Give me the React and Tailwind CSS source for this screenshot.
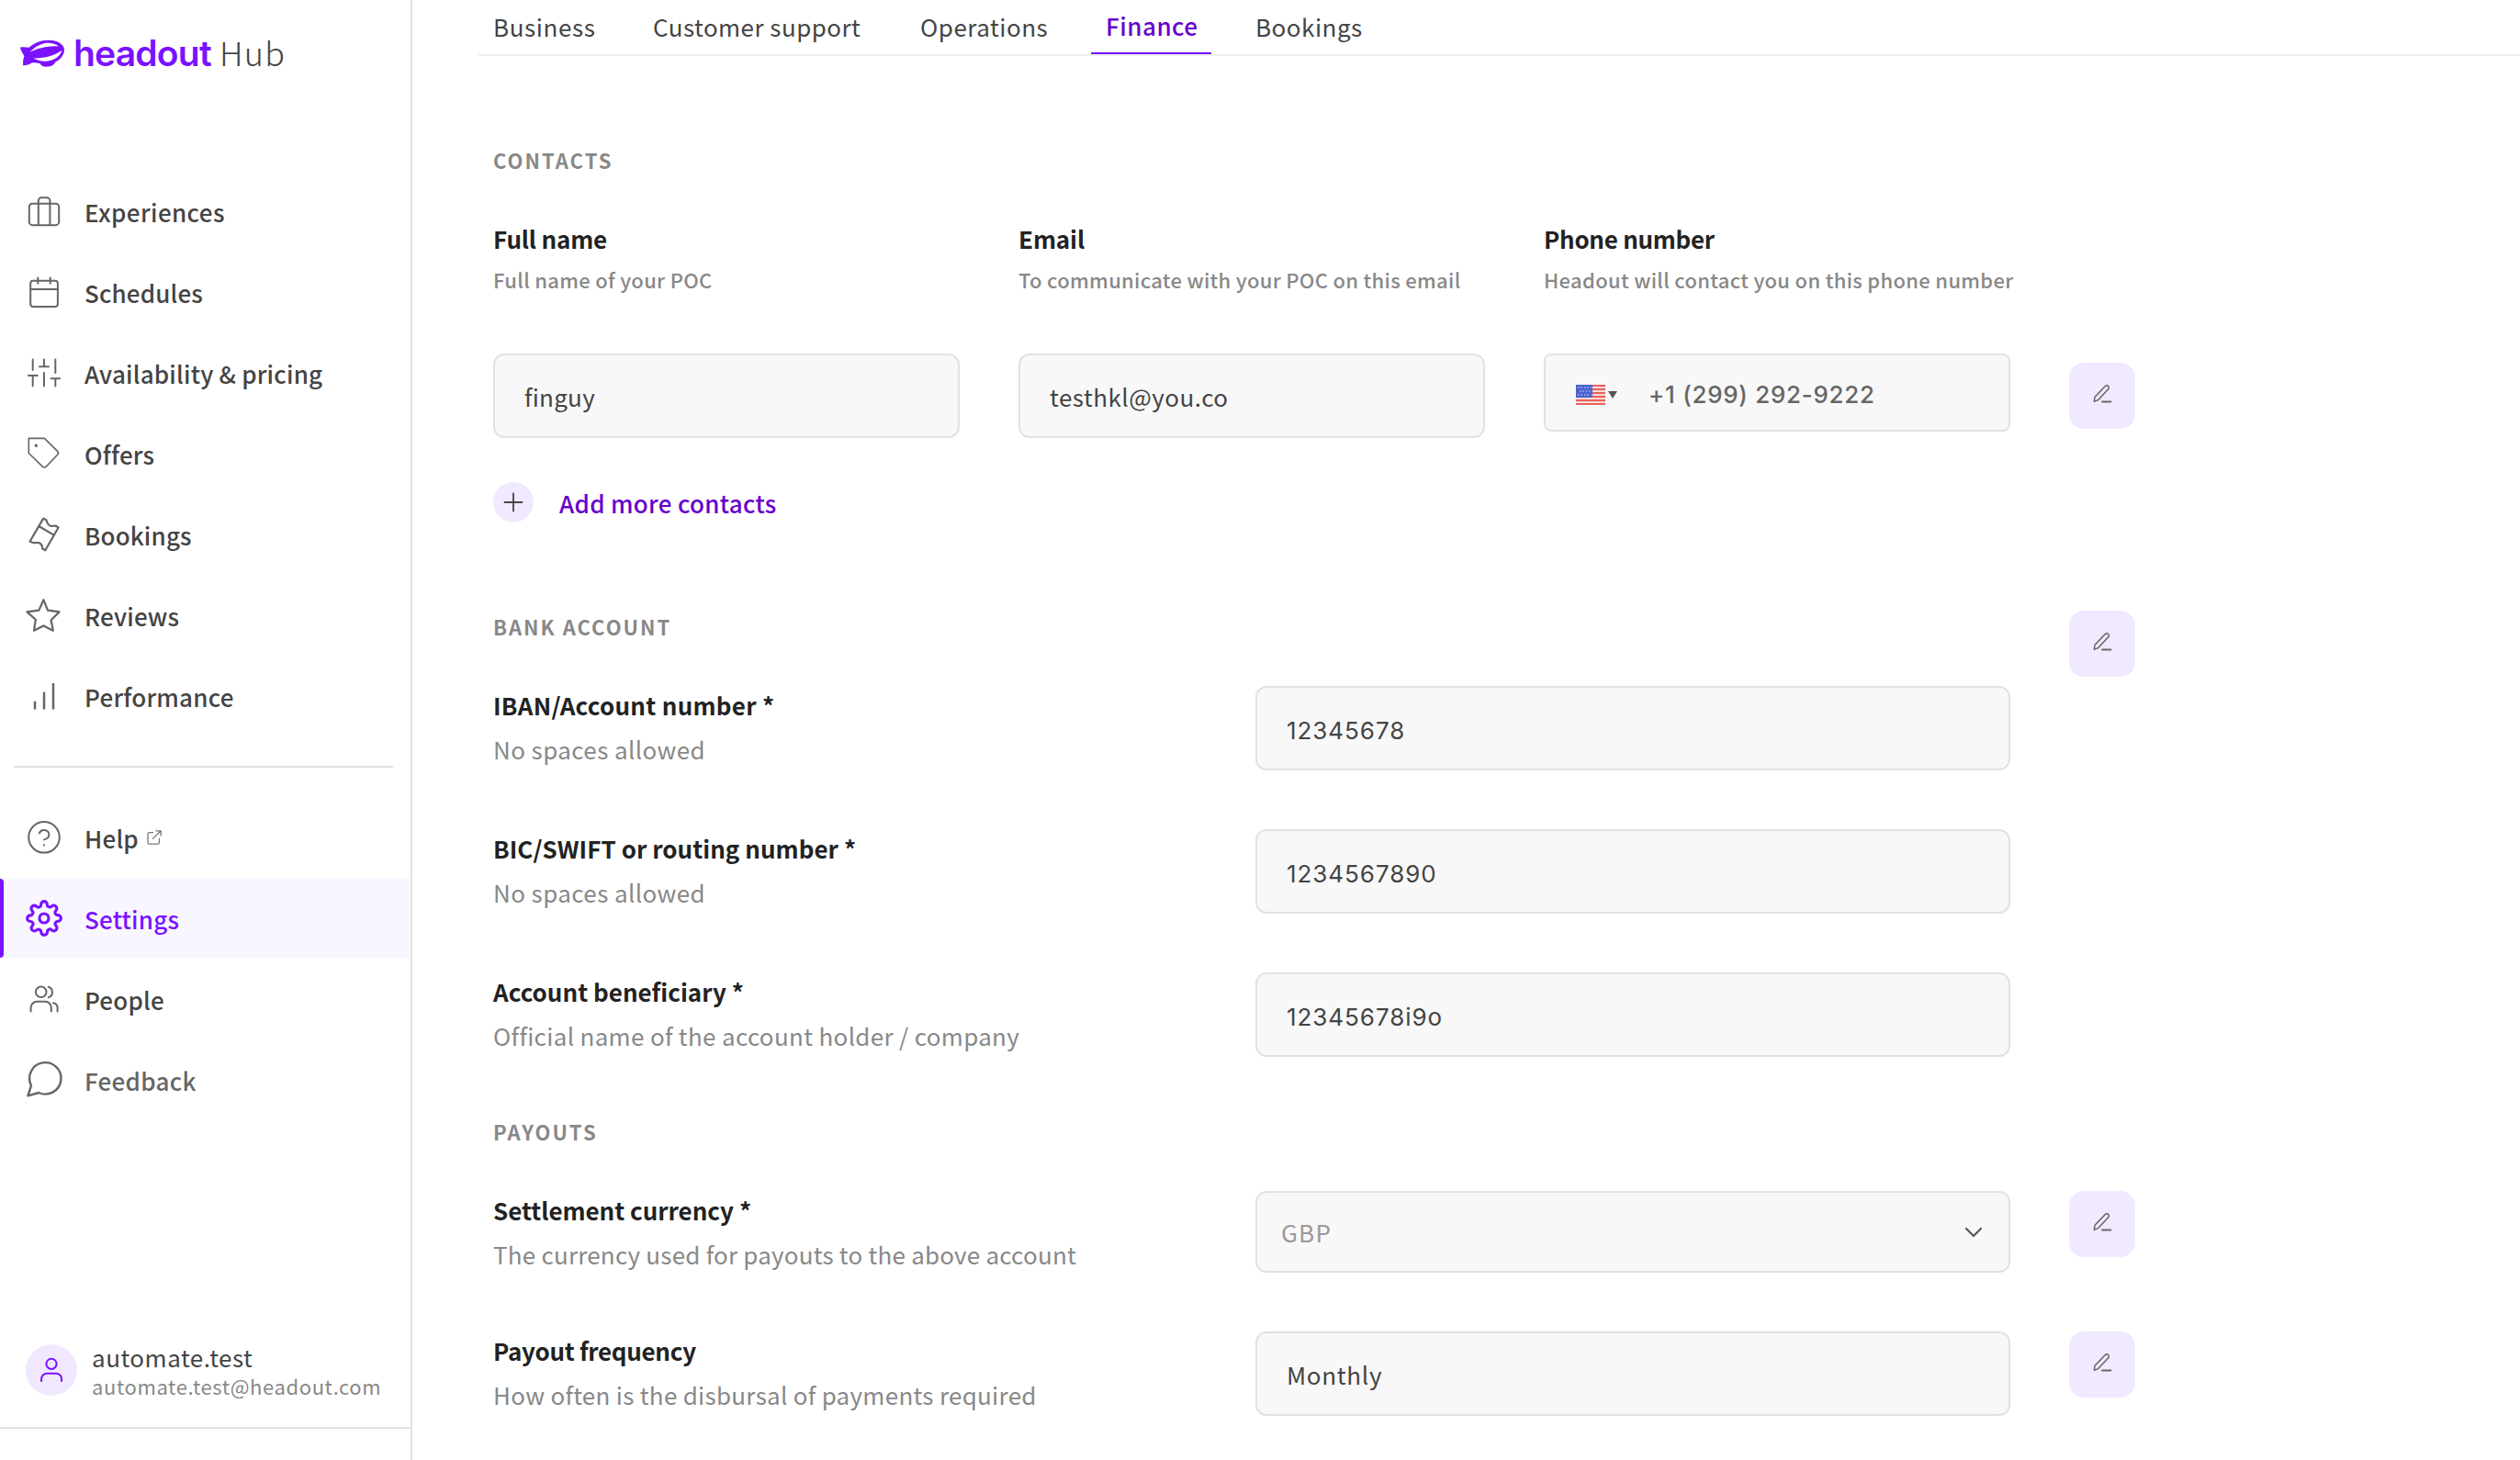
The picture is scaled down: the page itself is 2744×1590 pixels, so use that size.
import { FiSettings } from 'react-icons/fi'

function Icon({ children, width = 2, className = 'text-[#666666]' }) {
  return (
    <svg
      viewBox="0 0 44 44"
      fill="none"
      stroke="currentColor"
      strokeWidth={width}
      strokeLinecap="round"
      strokeLinejoin="round"
      className={`w-11 h-11 shrink-0 ${className}`}
    >
      {children}
    </svg>
  )
}

const mainLinks = [
  {
    label: 'Experiences',
    tracking: 'tracking-[0.4px]',
    icon: (
      <Icon>
        <rect x="5.8" y="13.7" width="32.4" height="23.5" rx="3.6" />
        <path d="M15.8 37V10.5a3.3 3.3 0 0 1 3.3-3.3h6a3.3 3.3 0 0 1 3.3 3.3V37" />
      </Icon>
    ),
  },
  {
    label: 'Schedules',
    tracking: 'tracking-[0.15px]',
    icon: (
      <Icon>
        <rect x="7.2" y="9.7" width="29.7" height="28.2" rx="3" />
        <path d="M7.2 19h29.7M15.3 6.4v6.4M28.7 6.4v6.4" />
      </Icon>
    ),
  },
  {
    label: 'Availability & pricing',
    tracking: 'tracking-[0.2px]',
    icon: (
      <Icon>
        <path d="M9.7 7.5v11.4M5 25h9.6M9.7 25v11.5M22 7.5v7.8M17 15.3h10M22 22v14.5M34.3 7.5v14.4M29.6 28.3h9.6M34.3 28.3v8.2" />
      </Icon>
    ),
  },
  {
    label: 'Offers',
    tracking: 'tracking-[0.2px]',
    icon: (
      <Icon width={1.6}>
        <path d="M5.3 5.4H22.4L36.6 19.4a2.8 2.8 0 0 1 0 3.8L24.3 36.1a2.8 2.8 0 0 1-4 0L5.3 21.5Z" />
        <circle cx="13.3" cy="13.3" r="0.9" fill="currentColor" />
      </Icon>
    ),
  },
  {
    label: 'Bookings',
    tracking: 'tracking-[0.15px]',
    icon: (
      <Icon width={2.2}>
        <path d="M21.2 4.6 24.4 6.3C25.4 8.8 25.8 12.4 29.6 12.9c2.8.3 4.6-1.8 8 1.6L23.3 39.3l-3.1-1.8C19.9 34.9 20 31.8 16 31.1c-3.2-.5-5.4 1.3-9.5-1.4ZM16.7 13.3 32.6 22.6" />
      </Icon>
    ),
  },
  {
    label: 'Reviews',
    tracking: 'tracking-[0.2px]',
    icon: (
      <Icon width={2.2}>
        <path d="M21.4 5.2 26 16.6 38.6 18.4 29.6 27.2 31.8 38.8 21.4 33.4 11 38.8 12.8 26.8 3.4 18.4 16.4 16.6Z" />
      </Icon>
    ),
  },
  {
    label: 'Performance',
    tracking: 'tracking-[0.25px]',
    icon: (
      <Icon width={2.5}>
        <path d="M12 28.7v6.7M22 18.8v16.6M32 9v26.4" />
      </Icon>
    ),
  },
]

const otherLinks = [
  {
    label: 'Help',
    tracking: 'tracking-[0.2px]',
    external: true,
    icon: (
      <Icon>
        <circle cx="22" cy="21.8" r="16.8" />
        <path d="M16.8 17.4a5.5 5.5 0 0 1 10.6 1.8c0 3.6-5.4 5.2-5.4 5.2M22 30.3v.1" />
      </Icon>
    ),
  },
  {
    label: 'Settings',
    tracking: 'tracking-[0.2px]',
    active: true,
    icon: (
      <span className="flex items-center justify-center w-11 h-11 shrink-0">
        <FiSettings size={40} strokeWidth={1.9} />
      </span>
    ),
  },
  {
    label: 'People',
    tracking: 'tracking-[0.2px]',
    icon: (
      <Icon>
        <circle cx="18.7" cy="14.3" r="5.8" />
        <path d="M26.8 8.7a6 6 0 0 1 0 11.4M7.6 35.6v-4.4a6.4 6.4 0 0 1 6.4-6.4h9.4a6.4 6.4 0 0 1 6.4 6.4v4.4M32 26.2a5.6 5.6 0 0 1 4.6 5.6v3.8" />
      </Icon>
    ),
  },
  {
    label: 'Feedback',
    tracking: 'tracking-[0.3px]',
    muted: true,
    icon: (
      <Icon width={2.4}>
        <path d="M16.2 36A17.2 17.2 0 1 0 8 28.2L4.4 39.4Z" />
      </Icon>
    ),
  },
]

const tabs = [
  { label: 'Business', size: 'w-[142px] tracking-[0.6px]' },
  { label: 'Customer support', size: 'w-[259px] tracking-[0.45px]' },
  { label: 'Operations', size: 'w-[170px] tracking-[0.5px]' },
  { label: 'Finance', size: 'w-[131px] tracking-[0.5px]', active: true },
  { label: 'Bookings', size: 'w-[150px] tracking-[0.5px]' },
]

function Logo() {
  return (
    <div className="flex items-start h-[186px] pl-[22px] pt-8">
      <svg viewBox="0 0 48 30" className="w-12 h-[30px] mt-[11px] mr-[10px] shrink-0">
        <path
          fill="#7a12ff"
          fillRule="evenodd"
          d="M0 8.7C3 7.6 6 8.6 9.7 8.7C15 4 22 .7 30.5 .7C41 .7 48 5.5 48 11.500C48 17 43.5 22 38.3 24.5C37.500 27 35 29 30.500 29.600C25.500 30 22.500 28.500 21.500 26C18 25.200 15 25 13 25.300C9.500 27.500 6.500 28.600 3 28.300L3.200 22L4.300 18.800C3.500 15 1 13.500 0 8.700ZM10.500 13.800C18 9.500 31 6.500 41.800 7.300C38.500 4.300 32 3 27 4C20 5.500 14.500 9.500 10.500 13.800ZM14.500 20.400C18 22.400 23 23.900 28 23.700C37 23.300 44.500 17.500 45.200 12C38 17.500 25 20.800 14.500 20.400Z"
        />
      </svg>
      <div className="flex items-baseline leading-[48px]">
        <span className="w-[159px] font-[Inter,sans-serif] text-[39px] font-semibold tracking-[-0.8px] text-[#7a12ff]">
          headout
        </span>
        <span className="text-[36px] font-light tracking-[1.2px] text-[#444444]">Hub</span>
      </div>
    </div>
  )
}

function NavLink({ item }) {
  const color = item.active ? 'text-[#7a12ff]' : item.muted ? 'text-[#666666]' : 'text-[#444444]'
  return (
    <a
      className={`relative flex items-center h-[88px] pl-[26px] text-[26px] leading-8 font-medium ${item.tracking} ${color} ${
        item.active ? 'bg-[#f8f6ff]' : ''
      }`}
    >
      {item.active && <span className="absolute left-0 top-px bottom-px w-1 rounded-r-md bg-[#7a12ff]" />}
      {item.icon}
      <span className="ml-[22px] mt-0.5">{item.label}</span>
      {item.external && (
        <svg
          viewBox="0 0 16 16"
          fill="none"
          stroke="#777777"
          strokeWidth="1.3"
          strokeLinecap="round"
          strokeLinejoin="round"
          className="w-4 h-4 ml-[9px]"
        >
          <path d="M6.5 2.7H2.7A1.7 1.7 0 0 0 1 4.4v9a1.7 1.7 0 0 0 1.7 1.7h9a1.7 1.7 0 0 0 1.7-1.7V9.2M10 .8h5.200V6M15 1 6.4 9.4" />
        </svg>
      )}
    </a>
  )
}

function Sidebar() {
  return (
    <aside className="flex flex-col w-[449px] h-[1590px] shrink-0 border-r-2 border-[#e2e2e2]">
      <Logo />
      <nav>
        {mainLinks.map((item) => (
          <NavLink key={item.label} item={item} />
        ))}
        <div className="h-0.5 ml-[15px] mr-[19px] my-8 bg-[#e2e2e2]" />
        {otherLinks.map((item) => (
          <NavLink key={item.label} item={item} />
        ))}
      </nav>

      {/* Signed-in user */}
      <div className="flex items-start mt-auto mb-[34px] h-[96px] pt-0.5 pl-7 border-b-2 border-[#e2e2e2]">
        <div className="mt-0.5 w-14 h-14 shrink-0 rounded-full bg-[#f1e8ff]">
          <svg
            viewBox="0 0 56 56"
            fill="none"
            stroke="#7a12ff"
            strokeWidth="2"
            strokeLinecap="round"
            className="w-14 h-14"
          >
            <circle cx="28" cy="21.3" r="5.6" />
            <path d="M17.1 40v-2.2a6 6 0 0 1 6-6h10a6 6 0 0 1 6 6V40" />
          </svg>
        </div>
        <div className="ml-4">
          <p className="text-[26px] leading-8 tracking-[0.5px] text-[#444444]">automate.test</p>
          <p className="mt-px text-[22px] leading-7 tracking-[0.6px] text-[#888888]">
            automate.test@headout.com
          </p>
        </div>
      </div>
    </aside>
  )
}

function SectionTitle({ children, className = '' }) {
  return (
    <h2 className={`text-[22px] leading-7 font-bold tracking-[2px] text-[#888888] ${className}`}>{children}</h2>
  )
}

function EditButton({ className = '' }) {
  return (
    <button className={`flex items-center justify-center w-[72px] h-[72px] shrink-0 rounded-2xl bg-[#f1e9ff] ${className}`}>
      <svg
        viewBox="0 0 24 24"
        fill="none"
        stroke="#666666"
        strokeWidth="1.5"
        strokeLinecap="round"
        strokeLinejoin="round"
        className="w-6 h-6 -mt-1"
      >
        <path d="M3.300 20.300 4.100 15.200 15.400 3.500a2.300 2.300 0 0 1 3.300 0 2.300 2.300 0 0 1 0 3.300L7.700 18.600Z" />
        <path strokeWidth="2" strokeLinecap="butt" d="M11.3 20.5h10.9" />
      </svg>
    </button>
  )
}

function Box({ className = 'h-[92px] px-8 rounded-xl', children }) {
  return (
    <div className={`flex items-center border-2 border-[#e2e2e2] bg-[#f8f8f8] text-[26px] leading-8 text-[#444444] ${className}`}>
      {children}
    </div>
  )
}

function Row({ label, hint, labelTracking, hintTracking, children }) {
  return (
    <div className="flex items-start">
      <div className="w-[830px] shrink-0 pt-[5px]">
        <p className={`text-[26px] leading-8 font-bold text-[#222222] ${labelTracking}`}>{label}</p>
        <p className={`mt-4 text-[26px] leading-8 text-[#888888] ${hintTracking}`}>{hint}</p>
      </div>
      {children}
    </div>
  )
}

function Flag() {
  return (
    <svg viewBox="0 0 32 22" className="w-8 h-[22px] mt-1">
      <rect width="32" height="22" fill="#f6dada" />
      <path stroke="#e8605a" strokeWidth="2" d="M0 1h32M0 5h32M0 9h32M0 13h32M0 17h32M0 21h32" />
      <rect width="18" height="14" fill="#4a62cc" />
      <path stroke="#a9b8f2" strokeWidth="1.5" strokeDasharray="1.5 2" d="M2 3h15M4 7h12M2 11h15" />
    </svg>
  )
}

const contactColumns = [
  { label: 'Full name', hint: 'Full name of your POC', labelTracking: 'tracking-[-0.2px]' },
  { label: 'Email', hint: 'To communicate with your POC on this email', labelTracking: 'tracking-[-0.1px]' },
  { label: 'Phone number', hint: 'Headout will contact you on this phone number', labelTracking: 'tracking-[-0.3px]' },
]

const bankFields = [
  {
    label: 'IBAN/Account number *',
    hint: 'No spaces allowed',
    value: '12345678',
    labelTracking: 'tracking-[0.27px]',
    hintTracking: 'tracking-[0.4px]',
  },
  {
    label: 'BIC/SWIFT or routing number *',
    hint: 'No spaces allowed',
    value: '1234567890',
    labelTracking: 'tracking-[0.03px]',
    hintTracking: 'tracking-[0.4px]',
  },
  {
    label: 'Account beneficiary *',
    hint: 'Official name of the account holder / company',
    value: '12345678i9o',
    labelTracking: 'tracking-[0.02px]',
    hintTracking: 'tracking-[0.32px]',
  },
]

function Contacts() {
  return (
    <section>
      <SectionTitle>CONTACTS</SectionTitle>
      <div className="grid grid-cols-[508px_508px_508px] gap-x-16 mt-14">
        {contactColumns.map((col) => (
          <div key={col.label} className="whitespace-nowrap">
            <p className={`text-[26px] leading-8 font-bold text-[#222222] ${col.labelTracking}`}>{col.label}</p>
            <p className="mt-3.5 text-[22px] leading-7 font-medium tracking-[0.3px] text-[#888888]">{col.hint}</p>
          </div>
        ))}
      </div>
      <div className="grid grid-cols-[508px_508px_508px_72px] items-start gap-x-16 mt-[67px]">
        <Box>
          <span className="pt-0.5 tracking-[0.25px]">finguy</span>
        </Box>
        <Box>
          <span className="pt-0.5 tracking-[0.5px]">testhkl@you.co</span>
        </Box>
        <Box className="h-[85px] pl-[33px] rounded-lg">
          <Flag />
          <span className="ml-[3px] mt-1 border-x-[5.5px] border-t-[8px] border-x-transparent border-t-[#555555]" />
          <span className="ml-[34px] pt-[5px] font-[Inter,sans-serif] font-medium tracking-[0.7px] text-[#666666]">
            +1 (299) 292-9222
          </span>
        </Box>
        <EditButton className="mt-2.5" />
      </div>
      <button className="flex items-center mt-12">
        <span className="flex items-center justify-center w-11 h-11 rounded-full bg-[#f1e9ff]">
          <svg viewBox="0 0 22 22" stroke="#444444" strokeWidth="1.8" strokeLinecap="round" className="w-[22px] h-[22px]">
            <path d="M11 1.5v19M1.5 11h19" />
          </svg>
        </span>
        <span className="ml-7 pt-0.5 text-[26px] leading-8 font-medium tracking-[0.3px] text-[#6600cc]">
          Add more contacts
        </span>
      </button>
    </section>
  )
}

function BankAccount() {
  return (
    <section className="mt-24">
      <div className="flex items-start gap-16 mb-2.5">
        <SectionTitle className="w-[1652px] pt-[3px]">BANK ACCOUNT</SectionTitle>
        <EditButton />
      </div>
      <div className="flex flex-col gap-16">
        {bankFields.map((field) => (
          <Row key={field.label} {...field}>
            <Box className="w-[822px] h-[92px] px-8 rounded-xl">
              <span className="pt-[5px] font-[Inter,sans-serif] tracking-[0.95px]">{field.value}</span>
            </Box>
          </Row>
        ))}
      </div>
    </section>
  )
}

function Payouts() {
  return (
    <section className="mt-[67px]">
      <SectionTitle>PAYOUTS</SectionTitle>
      <div className="flex flex-col gap-16 mt-[51px]">
        <div className="h-[89px]">
          <Row
            label="Settlement currency *"
            hint="The currency used for payouts to the above account"
            labelTracking="tracking-[-0.02px]"
            hintTracking="tracking-[0.21px]"
          >
            <Box className="w-[822px] h-[89px] pl-[26px] pr-[28px] rounded-xl justify-between">
              <span className="tracking-[1.2px] text-[#999999]">GBP</span>
              <svg
                viewBox="0 0 20 12"
                fill="none"
                stroke="#555555"
                strokeWidth="2.2"
                strokeLinecap="round"
                strokeLinejoin="round"
                className="w-5 h-3"
              >
                <path d="M2 2l8 8 8-8" />
              </svg>
            </Box>
            <EditButton className="ml-16" />
          </Row>
        </div>
        <Row
          label="Payout frequency"
          hint="How often is the disbursal of payments required"
          labelTracking="tracking-[-0.3px]"
          hintTracking="tracking-[0.28px]"
        >
          <Box className="w-[822px] h-[92px] px-8 rounded-xl">
            <span className="pt-0.5 tracking-[0.7px]">Monthly</span>
          </Box>
          <EditButton className="ml-16" />
        </Row>
      </div>
    </section>
  )
}

export default function App() {
  return (
    <div className="flex w-[2744px] h-[1590px] overflow-hidden bg-white font-['Noto_Sans_CJK_SC',sans-serif]">
      <Sidebar />
      <main className="flex-1">
        <div className="flex gap-8 h-[61px] ml-[72px] border-b-2 border-[#f0f0f0]">
          {tabs.map((tab) => (
            <a
              key={tab.label}
              className={`h-[59px] pl-4 whitespace-nowrap text-[26px] leading-8 ${tab.size} ${
                tab.active
                  ? 'pt-3 border-b-2 border-[#7a12ff] font-medium text-[#6600cc]'
                  : 'pt-[13px] text-[#444444]'
              }`}
            >
              {tab.label}
            </a>
          ))}
        </div>
        <div className="pl-[88px] pt-[99px]">
          <Contacts />
          <BankAccount />
          <Payouts />
        </div>
      </main>
    </div>
  )
}
